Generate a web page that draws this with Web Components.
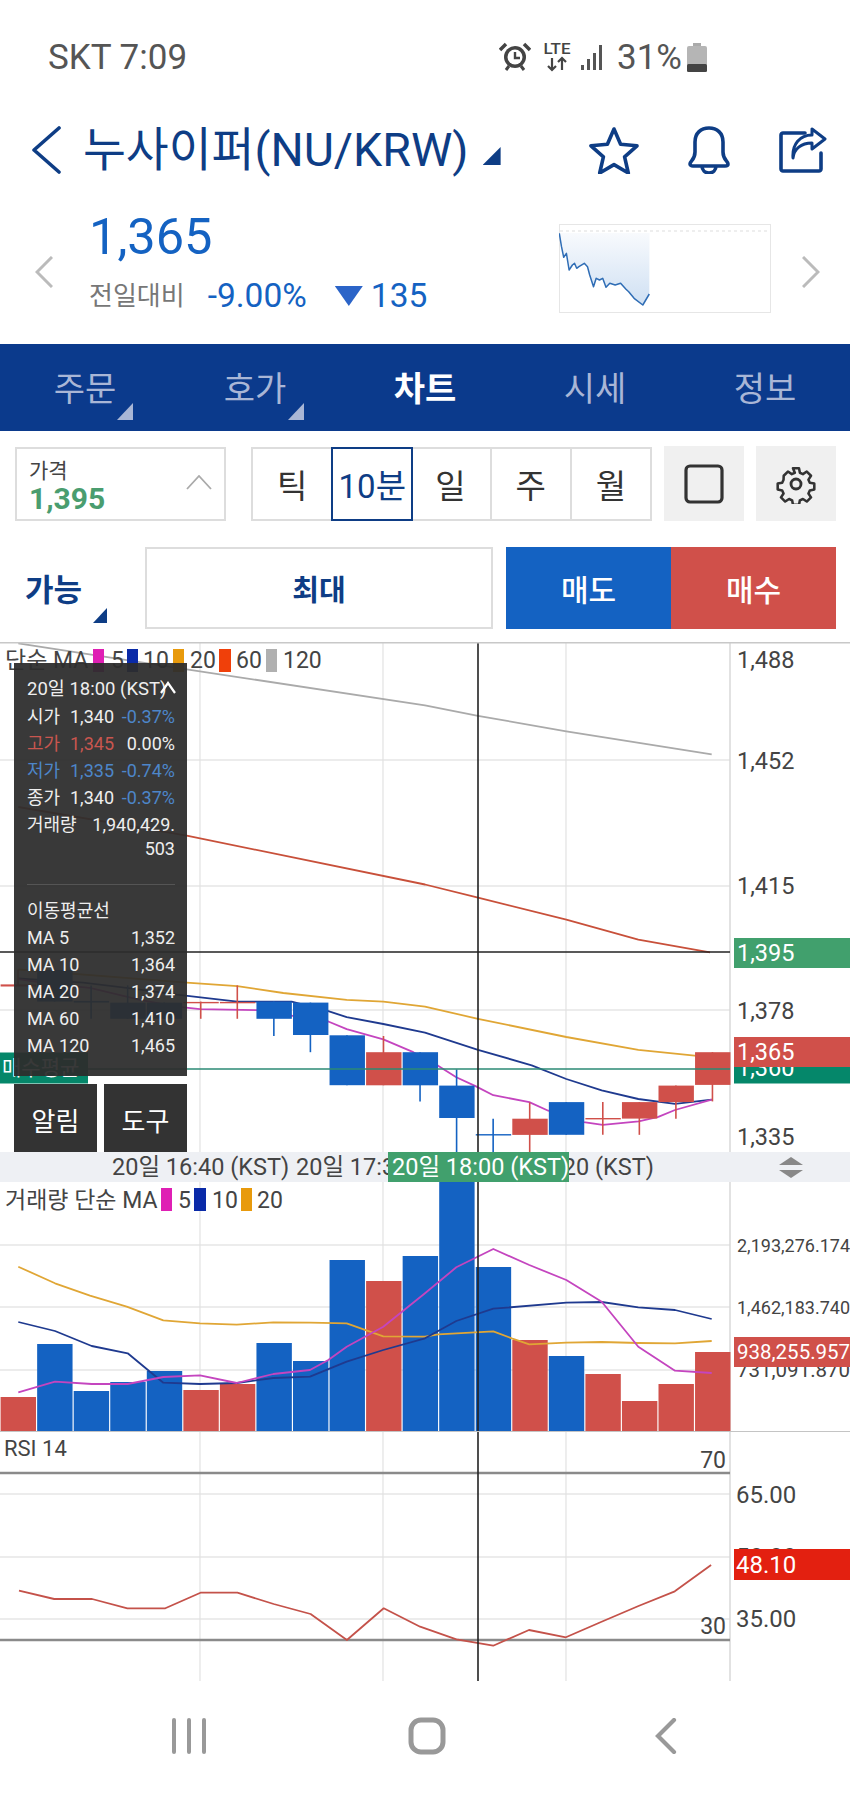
<!DOCTYPE html>
<html lang="ko">
<head>
<meta charset="utf-8">
<title>NU/KRW</title>
<style>
    html, body { margin: 0; padding: 0; background: #fff; }
    body { width: 850px; font-family: Roboto, "Noto Sans CJK KR", sans-serif; }
</style>
</head>
<body>
<status-bar carrier="SKT 7:09" battery="31%"></status-bar>
<title-bar name="누사이퍼(NU/KRW)"></title-bar>
<price-summary price="1,365" rate="-9.00%" diff="135"></price-summary>
<tab-bar></tab-bar>
<chart-toolbar></chart-toolbar>
<order-bar></order-bar>
<price-pane></price-pane>
<time-axis></time-axis>
<volume-pane></volume-pane>
<rsi-pane></rsi-pane>
<nav-bar></nav-bar>

<script>
const NAVY = '#0e3d85';
const BLUE = '#1462c2';
const RED = '#d0504a';
const GREEN = '#41a06d';
const TEAL = '#05876a';
const FONT = 'Roboto, "Noto Sans CJK KR", sans-serif';

// bar slots of all three panes
const slotX = i => 36.55 * i + 0.6;
const slotC = i => 36.55 * i + 18;
const SLOT_W = 35.4;
const GRID_X = [200, 383, 566];
const CROSS_X = 478;

// the numbers below were read off 3x crops, so each list brings its own scale
const toPoints = (list, ox, sx, oy, sy) =>
    list.map(([x, y]) => `${(ox + x / sx).toFixed(1)},${(oy + y / sy).toFixed(1)}`).join(' ');
const polyline = (points, color, width) =>
    `<polyline points="${points}" fill="none" stroke="${color}" stroke-width="${width}" stroke-linejoin="round"/>`;
const hLine = (y, x2, color, width) =>
    `<line x1="0" x2="${x2}" y1="${y}" y2="${y}" stroke="${color}" stroke-width="${width}"/>`;
const vLine = (x, y1, y2, color, width) =>
    `<line x1="${x}" x2="${x}" y1="${y1}" y2="${y2}" stroke="${color}" stroke-width="${width}"/>`;
const label = (x, y, text, size, color, anchor) =>
    `<text x="${x}" y="${y}" font-size="${size}" fill="${color}" text-anchor="${anchor || 'start'}" dominant-baseline="central">${text}</text>`;
const swatch = (x, y, w, h, color) => `<rect x="${x}" y="${y}" width="${w}" height="${h}" fill="${color}"/>`;

const PANE_STYLE = `
    <style>
        :host { display: block; position: relative; width: 850px; overflow: hidden; background: #fff; }
        svg { display: block; font-family: ${FONT}; }
    </style>`;

class StatusBar extends HTMLElement {
    connectedCallback() {
        this.attachShadow({ mode: 'open' }).innerHTML = `
            <style>
                :host { display: flex; align-items: center; height: 100px; box-sizing: border-box; padding: 14px 0 0 48px; color: #555; font-size: 35px; }
                .right { display: flex; align-items: center; margin-left: auto; margin-right: 143px; }
                svg { display: block; }
                .pct { margin: 0 5px 0 11px; }
            </style>
            <span>${this.getAttribute('carrier')}</span>
            <div class="right">
                <svg width="32" height="30" viewBox="0 0 32 30">
                    <circle cx="16" cy="15" r="11" fill="#444"/>
                    <circle cx="16" cy="15" r="7.5" fill="#fff"/>
                    <path d="M16 10v6h5" fill="none" stroke="#444" stroke-width="2.4"/>
                    <path d="M1 8 7 2M31 8 25 2" stroke="#444" stroke-width="3.5"/>
                    <path d="M7 28 10 24M25 28 22 24" stroke="#444" stroke-width="3"/>
                </svg>
                <svg width="30" height="30" viewBox="0 0 30 30" style="margin-left:11px">
                    <text x="15" y="12" font-size="14.5" font-weight="500" fill="#444" text-anchor="middle" font-family="${FONT}" textLength="27" lengthAdjust="spacingAndGlyphs">LTE</text>
                    <path d="M10 16v12M6 24l4 4 4-4M20 28V16M16 20l4-4 4 4" fill="none" stroke="#444" stroke-width="2.2"/>
                </svg>
                <svg width="25" height="26" viewBox="0 0 25 26" style="margin-left:9px">
                    <rect x="0" y="21" width="3" height="5" fill="#555"/>
                    <rect x="6" y="15" width="3" height="11" fill="#555"/>
                    <rect x="12" y="9" width="3" height="17" fill="#555"/>
                    <rect x="18" y="1" width="3" height="25" fill="#555"/>
                </svg>
                <span class="pct">${this.getAttribute('battery')}</span>
                <svg width="20" height="29" viewBox="0 0 20 29">
                    <rect x="6" y="0" width="8" height="4" fill="#aaa"/>
                    <rect x="0" y="3" width="20" height="26" rx="2" fill="#b5b5b5"/>
                    <rect x="0" y="21" width="20" height="8" rx="1.5" fill="#444"/>
                </svg>
            </div>
        `;
    }
}

class TitleBar extends HTMLElement {
    connectedCallback() {
        this.attachShadow({ mode: 'open' }).innerHTML = `
            <style>
                :host { display: flex; align-items: center; height: 100px; box-sizing: border-box; padding: 0 23px 0 31px; color: ${NAVY}; }
                svg { display: block; fill: none; stroke: ${NAVY}; stroke-width: 3.6; stroke-linejoin: round; stroke-linecap: round; }
                .name { margin-left: 22px; font-size: 46.6px; line-height: 60px; white-space: nowrap; }
                .tri { margin: 12px 0 0 14px; width: 18px; height: 18px; background: ${NAVY}; clip-path: polygon(100% 0, 100% 100%, 0 100%); }
                .icons { display: flex; align-items: center; gap: 47px; margin-left: auto; }
            </style>
            <svg width="30" height="48" viewBox="0 0 30 48"><path d="M28 2 3 24l25 22"/></svg>
            <span class="name">${this.getAttribute('name')}</span>
            <span class="tri"></span>
            <div class="icons">
                <svg width="50" height="48" viewBox="0 0 50 48"><path d="M25 3l6.6 15.2 16.4 1.6-12.4 11 3.7 16.2L25 38.600 10.700 47l3.700-16.200L2 19.800l16.400-1.600z"/></svg>
                <svg width="46" height="48" viewBox="0 0 44 48"><path d="M3 38c0-3 5-4 5-12V16C8 7 14 2 22 2s14 5 14 14v10c0 8 5 9 5 12 0 1-1 2-3 2H6c-2 0-3-1-3-2zM15 40c0 4 3 7 7 7s7-3 7-7"/></svg>
                <svg width="48" height="46" viewBox="0 0 48 46"><path d="M26 6H4c-1 0-2 1-2 2v34c0 1 1 2 2 2h36c1 0 2-1 2-2V26"/><path d="M14 31c1-9 8-15 19-15V22L46 12 33 2v6C21 8 13 17 14 31z" stroke-width="3"/></svg>
            </div>
        `;
    }
}

class PriceSummary extends HTMLElement {
    connectedCallback() {
        const line = [[1032,700],[1036,740],[1040,772],[1045,760],[1050,810],[1056,795],[1060,790],[1064,805],[1068,800],[1078,790],[1084,800],[1088,825],[1095,860],[1100,835],[1106,840],[1112,835],[1118,862],[1125,850],[1135,855],[1145,850],[1155,868],[1160,875],[1170,895],[1186,915],[1198,882]];
        const pts = toPoints(line, 0, 1.845, 0, 3);
        this.attachShadow({ mode: 'open' }).innerHTML = `
            <style>
                :host { display: flex; align-items: center; height: 144px; box-sizing: border-box; padding: 0 30px 0 35px; position: relative; }
                svg { display: block; }
                .chev { fill: none; stroke: #bbb; stroke-width: 3; }
                .info { margin-left: 36px; width: 470px; align-self: flex-start; padding-top: 7px; }
                .price { font-size: 50.5px; line-height: 60px; color: ${BLUE}; }
                .sub { display: flex; align-items: center; margin-top: 9px; font-size: 33.5px; line-height: 40px; color: ${BLUE}; }
                .sub b { font-weight: 400; font-size: 26px; color: #777; margin-right: 23px; }
                .down { width: 28px; height: 20px; margin: 0 8px 0 28px; background: #2b64c8; clip-path: polygon(0 0, 100% 0, 50% 100%); }
                .spark { margin: -8px 31px 0 0; }
            </style>
            <svg class="chev" width="18" height="32" viewBox="0 0 18 32"><path d="M17 1 2 16l15 15"/></svg>
            <div class="info">
                <div class="price">${this.getAttribute('price')}</div>
                <div class="sub"><b>전일대비</b><span>${this.getAttribute('rate')}</span><span class="down"></span><span>${this.getAttribute('diff')}</span></div>
            </div>
            <svg class="spark" width="212" height="89" viewBox="559 224 212 89">
                <defs><linearGradient id="fade" gradientUnits="userSpaceOnUse" x1="0" x2="0" y1="233" y2="305"><stop offset="0" stop-color="#f8fafd"/><stop offset="1" stop-color="#cfe0f3"/></linearGradient></defs>
                <polygon points="559.500,233 ${pts} 649.500,233" fill="url(#fade)"/>
                <line x1="560" x2="770" y1="231" y2="231" stroke="#ddd" stroke-dasharray="3 3"/>
                <rect x="559.500" y="224.500" width="211" height="88" fill="none" stroke="#e6e6e6"/>
                ${polyline(pts, '#2f6db5', 1.5)}
            </svg>
            <svg class="chev" width="18" height="32" viewBox="0 0 18 32"><path d="M1 1l15 15L1 31"/></svg>
        `;
    }
}

class TabBar extends HTMLElement {
    connectedCallback() {
        const tabs = [['주문', true], ['호가', true], ['차트', false, true], ['시세'], ['정보']];
        this.attachShadow({ mode: 'open' }).innerHTML = `
            <style>
                :host { display: grid; grid-template-columns: repeat(5, 170px); height: 87px; background: #0b3a8c; }
                .tab { position: relative; display: flex; align-items: center; justify-content: center; padding-bottom: 2px; font-size: 34px; color: #a9b6d6; }
                .on { color: #fff; font-weight: 700; }
                .mark { position: absolute; left: 118px; top: 59px; width: 16px; height: 17px; background: #a9b6d6; clip-path: polygon(100% 0, 100% 100%, 0 100%); }
                .tab:nth-child(2) .mark { left: 117px; }
            </style>
            ${tabs.map(([text, mark, on]) => `<div class="tab ${on ? 'on' : ''}">${text}${mark ? '<i class="mark"></i>' : ''}</div>`).join('')}
        `;
    }
}

class ChartToolbar extends HTMLElement {
    connectedCallback() {
        const cells = ['틱', '10분', '일', '주', '월'];
        this.attachShadow({ mode: 'open' }).innerHTML = `
            <style>
                :host { display: flex; height: 105px; box-sizing: border-box; padding: 16px 0 0 15px; }
                svg { display: block; }
                .field { position: relative; width: 211px; height: 74px; box-sizing: border-box; border: 2px solid #ddd; padding: 10px 0 0 12px; }
                .field small { display: block; font-size: 21px; line-height: 24px; color: #444; }
                .field b { display: block; font-size: 30px; line-height: 32px; color: #4a9d6f; }
                .field svg { position: absolute; right: 12px; top: 26px; }
                .cells { display: flex; width: 401px; height: 74px; margin-left: 25px; box-sizing: border-box; border: 2px solid #ddd; }
                .cell { flex: 1; display: flex; align-items: center; justify-content: center; font-size: 33px; color: #333; border-left: 2px solid #ddd; }
                .cell:first-child { border-left: 0; }
                .sel { margin: -2px 0; border: 2px solid ${NAVY}; color: ${NAVY}; margin-right: -2px; position: relative; white-space: nowrap; }
                .sel + .cell { border-left: 0; }
                .square { display: flex; align-items: center; justify-content: center; width: 80px; height: 75px; margin-top: -1px; background: #f0f0f0; }
                .square.first { margin-left: 12px; }
                .square + .square { margin-left: 12px; }
            </style>
            <div class="field">
                <small>가격</small>
                <b>1,395</b>
                <svg width="26" height="15" viewBox="0 0 26 15"><path d="M1 14 13 1l12 13" fill="none" stroke="#aaa" stroke-width="1.800"/></svg>
            </div>
            <div class="cells">
                ${cells.map(text => `<div class="cell ${text === '10분' ? 'sel' : ''}">${text}</div>`).join('')}
            </div>
            <div class="square first">
                <svg width="40" height="40" viewBox="0 0 40 40"><rect x="2" y="2" width="36" height="36" rx="4" fill="none" stroke="#333" stroke-width="3.200"/></svg>
            </div>
            <div class="square">
                <svg width="40" height="40" viewBox="0 0 24 24" fill="none" stroke="#333" stroke-width="1.700" stroke-linejoin="round"><circle cx="12" cy="12" r="3"/><path d="M10 1.500h4l.6 3 2 .9 2.600-1.700 2.800 2.800-1.700 2.600.9 2 3 .6v4l-3 .6-.9 2 1.700 2.600-2.800 2.800-2.600-1.700-2 .9-.6 3h-4l-.6-3-2-.9-2.600 1.700-2.800-2.800 1.700-2.600-.9-2-3-.6v-4l3-.6.9-2L3.800 6.500l2.800-2.800 2.600 1.700 2-.9z" transform="translate(1.200 1.200) scale(.9)"/></svg>
            </div>
        `;
    }
}

class OrderBar extends HTMLElement {
    connectedCallback() {
        this.attachShadow({ mode: 'open' }).innerHTML = `
            <style>
                :host { display: flex; height: 106px; box-sizing: border-box; padding: 11px 14px 0 25px; }
                div { display: flex; align-items: center; justify-content: center; height: 82px; box-sizing: border-box; }
                .can { position: relative; width: 120px; justify-content: flex-start; font-size: 31px; font-weight: 700; color: ${NAVY}; padding-bottom: 2px; }
                .can i { position: absolute; left: 68px; top: 61px; width: 14px; height: 15px; background: ${NAVY}; clip-path: polygon(100% 0, 100% 100%, 0 100%); }
                .max { width: 348px; border: 2px solid #ddd; font-size: 29px; font-weight: 700; color: ${NAVY}; }
                .sell, .buy { width: 165px; font-size: 30px; font-weight: 500; color: #fff; }
                .sell { margin-left: 13px; background: ${BLUE}; }
                .buy { background: ${RED}; }
            </style>
            <div class="can">가능<i></i></div>
            <div class="max">최대</div>
            <div class="sell">매도</div>
            <div class="buy">매수</div>
        `;
    }
}

class PricePane extends HTMLElement {
    connectedCallback() {
        this.attachShadow({ mode: 'open' }).innerHTML = `
            ${PANE_STYLE}
            <style>
                :host { height: 510px; }
                .tip { position: absolute; left: 14px; top: 21px; width: 173px; height: 413px; box-sizing: border-box; padding: 13px 12px 0 13px; background: rgba(45,45,45,.94); color: #eee; font-size: 18px; line-height: 27px; }
                .row { display: grid; grid-template-columns: 43px 43px 1fr; white-space: nowrap; }
                .row span:nth-child(2), .row span:nth-child(3) { text-align: right; }
                .head { font-size: 18.5px; }
                .hi { color: #c9564f; }
                .lo { color: #4d86c9; }
                .pct { color: #4d86c9; }
                .white { color: #eee; }
                .sp { display: flex; justify-content: space-between; }
                .r { text-align: right; line-height: 22px; }
                hr { height: 1px; border: 0; margin: 24px 0 12px; background: #555; }
                .up { position: absolute; right: 11px; top: 18px; }
                .btns { position: absolute; left: 14px; top: 442px; display: flex; gap: 7px; }
                .btns div { display: flex; align-items: center; justify-content: center; width: 83px; height: 71px; background: #333; color: #fff; font-size: 26px; }
            </style>
            <svg width="850" height="510" viewBox="0 642 850 510">${this.chart()}</svg>
            <div class="tip">
                <div class="row head" style="grid-template-columns:1fr">20일 18:00 (KST)</div>
                <svg class="up" width="16" height="14" viewBox="0 0 16 14"><path d="M1 12 8 2l7 10" fill="none" stroke="#fff" stroke-width="2.200"/></svg>
                <div class="row"><span>시가</span><span>1,340</span><span class="pct">-0.37%</span></div>
                <div class="row hi"><span>고가</span><span>1,345</span><span class="white">0.00%</span></div>
                <div class="row lo"><span>저가</span><span>1,335</span><span>-0.74%</span></div>
                <div class="row"><span>종가</span><span>1,340</span><span class="pct">-0.37%</span></div>
                <div class="sp"><span>거래량</span><span>1,940,429.</span></div>
                <div class="r">503</div>
                <hr>
                <div>이동평균선</div>
                <div class="sp"><span>MA 5</span><span>1,352</span></div>
                <div class="sp"><span>MA 10</span><span>1,364</span></div>
                <div class="sp"><span>MA 20</span><span>1,374</span></div>
                <div class="sp"><span>MA 60</span><span>1,410</span></div>
                <div class="sp"><span>MA 120</span><span>1,465</span></div>
            </div>
            <div class="btns"><div>알림</div><div>도구</div></div>
        `;
    }

    chart() {
        const y = v => 640 + v / 2.904;
        // [slot, bodyTop, bodyBottom, wickTop, wickBottom, color]
        const candles = [
            [0, 1000, 1006, 957, 1003, RED], [1, 958, 1050, 958, 1050, BLUE], [2, 1048, 1053, 1003, 1100, BLUE],
            [3, 1053, 1100, 1003, 1100, BLUE], [4, 1053, 1100, 1053, 1100, BLUE], [5, 1051, 1055, 1050, 1100, RED],
            [6, 1051, 1055, 1003, 1100, RED], [7, 1050, 1100, 1050, 1150, BLUE], [8, 1053, 1147, 1053, 1197, BLUE],
            [9, 1148, 1293, 1148, 1293, BLUE], [10, 1197, 1293, 1150, 1293, RED], [11, 1197, 1293, 1197, 1340, BLUE],
            [12, 1294, 1388, 1247, 1487, BLUE], [13, 1435, 1439, 1390, 1487, BLUE], [14, 1390, 1437, 1343, 1487, RED],
            [15, 1342, 1437, 1342, 1437, BLUE], [16, 1388, 1392, 1342, 1437, RED], [17, 1342, 1390, 1342, 1437, RED],
            [18, 1294, 1342, 1294, 1390, RED], [19, 1197, 1292, 1197, 1340, RED]
        ];
        const pair = (a, b) => toPoints(a, 0, 3, 640, 2.904) + ' ' + toPoints(b, 425, 3, 640, 2.904);
        const ma120 = pair([[55,10],[560,85],[1275,190]], [[159,220],[424,265],[860,332]]);
        const ma60 = pair([[55,485],[560,568],[1275,710]], [[159,748],[424,812],[640,870],[855,907]]);
        const ma20 = pair([[55,957],[560,995],[712,1005],[850,1025],[1040,1045],[1150,1050],[1275,1065]], [[159,1100],[424,1153],[640,1190],[860,1212]]);
        const ma10 = pair([[55,983],[250,995],[380,1010],[530,1030],[712,1050],[875,1050],[985,1078],[1040,1095],[1150,1115],[1275,1140]], [[159,1190],[320,1235],[424,1275],[530,1308],[640,1333],[750,1347],[860,1335]]);
        const ma5 = pair([[55,985],[160,1000],[270,1010],[420,1045],[530,1065],[600,1072],[770,1075],[985,1108],[1040,1130],[1150,1160],[1240,1197]], [[37,1235],[94,1270],[150,1295],[205,1322],[313,1342],[370,1367],[476,1400],[533,1408],[641,1398],[700,1385],[750,1365],[860,1335]]);

        return `
            ${[760, 886, 1010].map(v => hLine(v, 730, '#e6e6e6', 1.5)).join('')}
            ${GRID_X.map(x => vLine(x, 642, 1152, '#e2e2e2', 1.2)).join('')}
            ${vLine(730, 642, 1152, '#d8d8d8', 1.5)}
            ${polyline(ma120, '#aaa', 1.8)}
            ${polyline(ma60, '#c8503a', 1.8)}
            ${polyline(ma20, '#e0a635', 1.8)}
            ${polyline(ma10, '#1f3a8f', 1.8)}
            ${polyline(ma5, '#c445bf', 1.8)}
            ${candles.map(([i, top, bottom, wickTop, wickBottom, color]) => `
                ${vLine(slotC(i), y(wickTop), y(wickBottom), color, 1.6)}
                <rect x="${slotX(i)}" y="${y(top).toFixed(1)}" width="${SLOT_W}" height="${(y(bottom) - y(top)).toFixed(1)}" fill="${color}"/>`).join('')}
            ${hLine(1069, 730, '#2b8a75', 1.6)}
            ${hLine(952, 730, '#222', 1.6)}
            ${vLine(CROSS_X, 642, 1152, '#222', 1.6)}
            <rect x="0" y="641" width="850" height="2.500" fill="#c8c8c8"/>

            ${label(5, 660, '단순 MA', 23, '#444')}
            ${swatch(93, 649, 11, 23, '#df1fb4')}${label(111, 660, '5', 23, '#444')}
            ${swatch(127, 649, 11, 23, '#0a2aa8')}${label(143, 660, '10', 23, '#444')}
            ${swatch(173, 649, 11, 23, '#e89a0c')}${label(190, 660, '20', 23, '#444')}
            ${swatch(219, 649, 12, 23, '#f0400a')}${label(236, 660, '60', 23, '#444')}
            ${swatch(266, 649, 11, 23, '#b0b0b0')}${label(283, 660, '120', 23, '#444')}

            ${label(737, 660, '1,488', 23.5, '#444')}
            ${label(737, 761, '1,452', 23.5, '#444')}
            ${label(737, 886, '1,415', 23.5, '#444')}
            ${label(737, 1010.5, '1,378', 23.5, '#444')}
            ${label(737, 1136.5, '1,335', 23.5, '#444')}
            ${swatch(734, 938, 116, 30, GREEN)}${label(737, 953, '1,395', 23.5, '#fff')}
            ${swatch(734, 1053, 116, 30.5, TEAL)}${label(737, 1068, '1,360', 23.5, '#fff')}
            ${swatch(734, 1037, 116, 30, RED)}${label(737, 1052, '1,365', 23.5, '#fff')}
            ${swatch(0, 1052.5, 88, 31, TEAL)}${label(2, 1068, '매수평균', 21, '#fff')}
        `;
    }
}

class TimeAxis extends HTMLElement {
    connectedCallback() {
        this.attachShadow({ mode: 'open' }).innerHTML = `
            <style>
                :host { display: block; position: relative; height: 30px; overflow: hidden; background: #eef0f4; color: #444; font-size: 23.5px; line-height: 30px; white-space: nowrap; }
                span { position: absolute; top: 0; }
                .now { left: 388px; width: 181px; box-sizing: border-box; padding-left: 4px; background: ${GREEN}; color: #fff; }
                svg { position: absolute; left: 779px; top: 5px; display: block; }
            </style>
            <span style="left:112px">20일 16:40 (KST)</span>
            <span style="left:296px">20일 17:30 (KST)</span>
            <span style="right:196px">20일 18:20 (KST)</span>
            <span class="now">20일 18:00 (KST)</span>
            <svg width="24" height="21" viewBox="0 0 24 21"><path d="M12 0l12 8H0zM0 13h24l-12 8z" fill="#888"/></svg>
        `;
    }
}

class VolumePane extends HTMLElement {
    connectedCallback() {
        this.attachShadow({ mode: 'open' }).innerHTML = `
            ${PANE_STYLE}
            <style>:host { height: 250px; }</style>
            <svg width="850" height="250" viewBox="0 1182 850 250">${this.chart()}</svg>
        `;
    }

    chart() {
        const tops = [1397, 1344, 1391, 1382, 1371, 1390, 1384, 1343, 1361, 1260, 1281, 1256, 1182, 1267, 1340, 1356, 1374, 1401, 1384, 1352];
        const reds = [0, 5, 6, 10, 14, 16, 17, 18, 19];
        const pair = (a, b) => toPoints(a, 0, 3, 1150, 3) + ' ' + toPoints(b, 425, 3, 1150, 3);
        const ma20 = pair([[55,350],[165,400],[270,437],[380,470],[490,511],[600,520],[710,524],[820,517],[930,518],[1040,520],[1150,559],[1275,560]], [[40,553],[205,544],[260,565],[313,583],[424,578],[530,576],[640,579],[750,580],[860,573]]);
        const ma10 = pair([[55,516],[165,543],[275,588],[383,610],[490,698],[600,702],[710,699],[820,684],[930,680],[1040,635],[1150,600],[1275,565]], [[94,513],[205,476],[424,458],[530,456],[640,472],[750,480],[860,507]]);
        const ma5 = pair([[55,727],[165,695],[275,702],[383,702],[490,681],[600,676],[710,699],[820,672],[930,660],[985,630],[1040,590],[1150,530],[1275,430]], [[94,352],[205,297],[313,345],[424,390],[530,455],[640,590],[750,662],[860,669]]);

        return `
            ${[1245, 1307, 1370].map(v => hLine(v, 730, '#e6e6e6', 1.5)).join('')}
            ${GRID_X.map(x => vLine(x, 1182, 1432, '#e2e2e2', 1.2)).join('')}
            ${vLine(730, 1182, 1432, '#d8d8d8', 1.5)}
            ${tops.map((top, i) => `<rect x="${slotX(i)}" y="${top}" width="${SLOT_W}" height="${1432 - top}" fill="${reds.includes(i) ? RED : BLUE}"/>`).join('')}
            ${polyline(ma20, '#e0a635', 1.8)}
            ${polyline(ma10, '#1f3a8f', 1.8)}
            ${polyline(ma5, '#c445bf', 1.8)}
            ${vLine(CROSS_X, 1182, 1432, '#222', 1.6)}
            <rect x="0" y="1431" width="850" height="1.500" fill="#c4c4c4"/>

            ${label(5, 1200, '거래량 단순 MA', 23, '#444')}
            ${swatch(161, 1188, 11, 23, '#df1fb4')}${label(178, 1200, '5', 23, '#444')}
            ${swatch(194, 1188, 12, 23, '#0a2aa8')}${label(212, 1200, '10', 23, '#444')}
            ${swatch(241, 1188, 11, 23, '#e89a0c')}${label(257, 1200, '20', 23, '#444')}

            ${label(737, 1245, '2,193,276.174', 18, '#444')}
            ${label(737, 1307, '1,462,183.740', 18, '#444')}
            ${label(737, 1370, '731,091.870', 20.5, '#444')}
            ${swatch(734, 1337, 116, 30, RED)}${label(737, 1352, '938,255.957', 20.5, '#fff')}
        `;
    }
}

class RsiPane extends HTMLElement {
    connectedCallback() {
        const line = toPoints([[35,512],[100,537],[170,537],[235,565],[305,565],[370,518],[438,518],[505,552],[573,582],[640,660],[708,565],[775,620],[842,658],[910,677],[976,630],[1044,652],[1110,605],[1178,558],[1245,514],[1312,435]], 0, 1.845, 1420, 3);
        this.attachShadow({ mode: 'open' }).innerHTML = `
            ${PANE_STYLE}
            <style>:host { height: 249px; }</style>
            <svg width="850" height="249" viewBox="0 1432 850 249">
                ${[1494, 1557, 1619].map(v => hLine(v, 730, '#e6e6e6', 1.5)).join('')}
                ${GRID_X.map(x => vLine(x, 1432, 1681, '#e2e2e2', 1.2)).join('')}
                ${vLine(730, 1432, 1681, '#d8d8d8', 1.5)}
                ${hLine(1473, 730, '#8a8a8a', 2.5)}
                ${hLine(1640, 730, '#8a8a8a', 2.5)}
                ${polyline(line, '#c4524a', 1.8)}
                ${vLine(CROSS_X, 1432, 1681, '#222', 1.6)}

                ${label(4, 1448, 'RSI 14', 22, '#444')}
                ${label(726, 1460, '70', 23, '#444', 'end')}
                ${label(726, 1626, '30', 23, '#444', 'end')}
                ${label(736, 1495, '65.00', 24, '#444')}
                ${label(736, 1557, '50.00', 24, '#444')}
                ${label(736, 1619, '35.00', 24, '#444')}
                ${swatch(734, 1549, 116, 31, '#e32010')}${label(736, 1565, '48.10', 24, '#fff')}
            </svg>
        `;
    }
}

class NavBar extends HTMLElement {
    connectedCallback() {
        this.attachShadow({ mode: 'open' }).innerHTML = `
            <style>
                :host { display: flex; align-items: center; height: 114px; box-sizing: border-box; padding: 0 0 4px 172px; }
                svg { display: block; fill: none; stroke: #999; stroke-linecap: round; }
            </style>
            <svg width="34" height="36" viewBox="0 0 34 36" stroke-width="4"><path d="M2 2v32M17 2v32M32 2v32"/></svg>
            <svg width="38" height="38" viewBox="0 0 38 38" stroke-width="5" style="margin-left:202px"><rect x="3" y="3" width="32" height="32" rx="10"/></svg>
            <svg width="22" height="36" viewBox="0 0 22 36" stroke-width="4.200" style="margin-left:209px"><path d="M19 2 3 18l16 16"/></svg>
        `;
    }
}

customElements.define('status-bar', StatusBar);
customElements.define('title-bar', TitleBar);
customElements.define('price-summary', PriceSummary);
customElements.define('tab-bar', TabBar);
customElements.define('chart-toolbar', ChartToolbar);
customElements.define('order-bar', OrderBar);
customElements.define('price-pane', PricePane);
customElements.define('time-axis', TimeAxis);
customElements.define('volume-pane', VolumePane);
customElements.define('rsi-pane', RsiPane);
customElements.define('nav-bar', NavBar);
</script>
</body>
</html>
